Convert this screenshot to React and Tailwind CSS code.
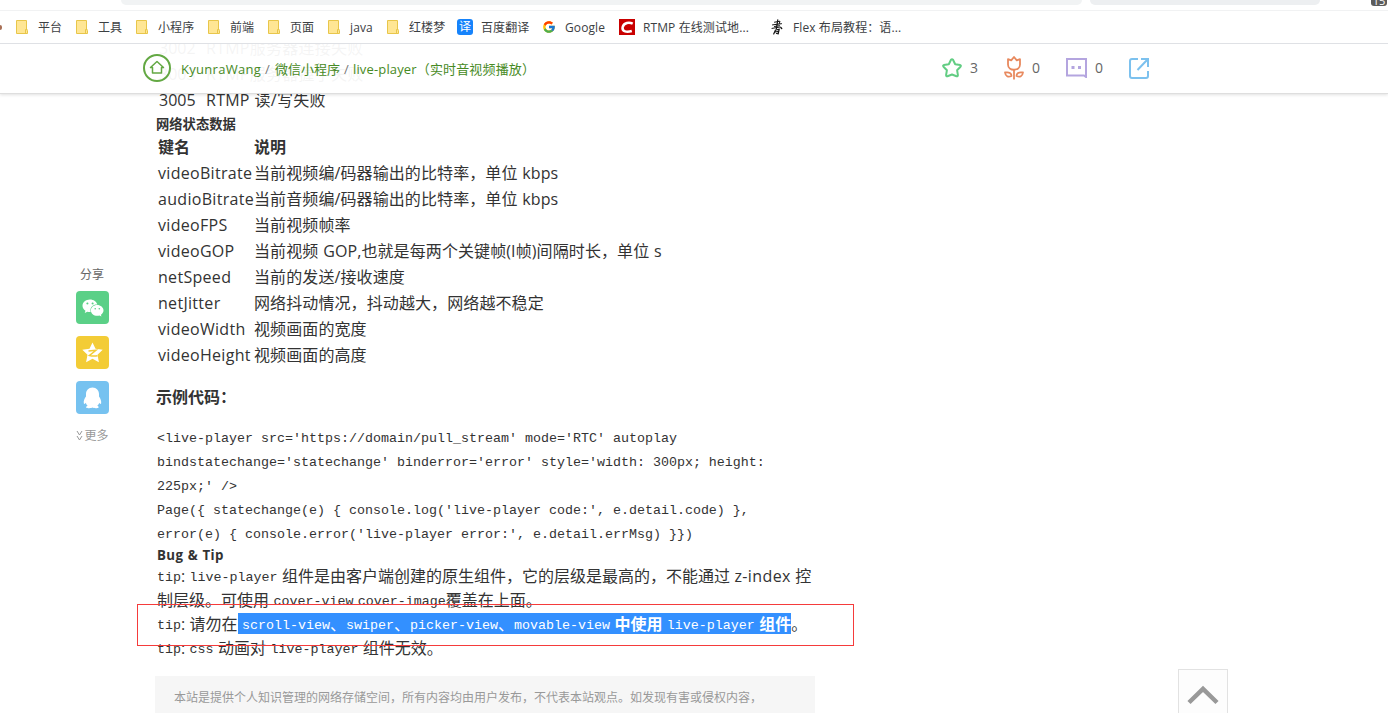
import { FaWeixin } from 'react-icons/fa';
import { FcGoogle } from 'react-icons/fc';

const mono = 'font-["Liberation_Mono","Noto_Sans_CJK_SC",monospace] text-[13.33px]';

const bookmarks = [
    { icon: 'folder', label: '平台', width: 'w-[60px]' },
    { icon: 'folder', label: '工具', width: 'w-[60px]' },
    { icon: 'folder', label: '小程序', width: 'w-[72px]' },
    { icon: 'folder', label: '前端', width: 'w-[60px]' },
    { icon: 'folder', label: '页面', width: 'w-[60px]' },
    { icon: 'folder', label: 'java', width: 'w-[59px]' },
    { icon: 'folder', label: '红楼梦', width: 'w-[72px]' },
    { icon: 'translate', label: '百度翻译', width: 'w-[84px]' },
    { icon: 'google', label: 'Google', width: 'w-[78px]' },
    { icon: 'csdn', label: 'RTMP 在线测试地...', width: 'w-[150px]' },
    { icon: 'book', label: 'Flex 布局教程：语...', width: 'w-[150px]' },
];

const codes = [
    ['3002', 'RTMP服务器连接失败'],
    ['3003', 'RTMP服务器握手失败'],
    ['3005', 'RTMP 读/写失败'],
];

const netStatus = [
    ['videoBitrate', '当前视频编/码器输出的比特率，单位 kbps'],
    ['audioBitrate', '当前音频编/码器输出的比特率，单位 kbps'],
    ['videoFPS', '当前视频帧率'],
    ['videoGOP', '当前视频 GOP,也就是每两个关键帧(I帧)间隔时长，单位 s'],
    ['netSpeed', '当前的发送/接收速度'],
    ['netJitter', '网络抖动情况，抖动越大，网络越不稳定'],
    ['videoWidth', '视频画面的宽度'],
    ['videoHeight', '视频画面的高度'],
];

const codeLines = [
    "<live-player src='https://domain/pull_stream' mode='RTC' autoplay",
    "bindstatechange='statechange' binderror='error' style='width: 300px; height:",
    "225px;' />",
    "Page({ statechange(e) { console.log('live-player code:', e.detail.code) },",
    "error(e) { console.error('live-player error:', e.detail.errMsg) }})",
];

function BookmarkIcon({ type }) {
    if (type === 'folder') {
        return (
            <svg width="16" height="16" viewBox="0 0 16 16">
                <path d="M2.5 1.5h10v9.5l1 .5v3h-11z" fill="#ffe694" stroke="#e8c64a" />
                <path d="M11.5 14v-3.5h2" fill="none" stroke="#e8c64a" />
            </svg>
        );
    }
    if (type === 'translate') {
        return (
            <span className="flex h-4 w-4 items-center justify-center rounded-[3px] bg-[#1683fb] text-xs text-white">译</span>
        );
    }
    if (type === 'google') return <FcGoogle className="h-[14px] w-4" />;
    if (type === 'csdn') {
        return (
            <svg width="16" height="16" viewBox="0 0 16 16">
                <path d="M0 0h16v16H0z" fill="#c90000" />
                <path d="M13.7 4.6C10.5 3 4.8 3.2 3.6 8.3c-.8 4.4 4.2 5.1 9.2 3.7" fill="none" stroke="#fff" strokeWidth="2.5" />
            </svg>
        );
    }
    return (
        <svg width="16" height="16" viewBox="0 0 16 16" fill="none" stroke="#111" strokeLinecap="round">
            <path d="M5.5 3.2l5.5-1-.8 2.5M3.5 5.9l9-1.2M5.5 7.5l5-.8M3 9.4l8-1.4" strokeWidth="1" />
            <path d="M8.8.8L7.4 9.5M6.5 11l-1.8 4M6.5 11l3.7-.7-1 4.5-1.7-.3M6 13l3-.5" strokeWidth="1.2" />
            <path d="M11.8 8.5l.9.9" strokeWidth="1.4" />
        </svg>
    );
}

function BrowserBar() {
    return (
        <div className="relative z-20 h-11 border-b border-[#dfe1e5] bg-white">
            <div className="box-content flex h-[10px] border-b border-[#f1f2f3]">
                <div className="ml-[121px] h-[5px] w-[961px] rounded-b-[10px] bg-[#f1f3f4]" />
                <div className="ml-[8px] h-[5px] w-[230px] rounded-b-[10px] bg-[#edeff1]" />
                <div className="ml-[51px] flex h-[6px] w-4 items-end justify-center overflow-hidden rounded-b-[3px] bg-[#5c5c5c] text-[11px] leading-[10px] text-white">15</div>
            </div>
            <div className="flex h-8 items-center text-xs text-[#3c4043]">
                <div className="mr-[12px] h-[5px] w-[2px] rounded-r bg-[#a86f55]" />
                {bookmarks.map((item) => (
                    <div key={item.label} className={`flex shrink-0 items-center gap-2 whitespace-nowrap ${item.width}`}>
                        <BookmarkIcon type={item.icon} />
                        <span className="pt-[2px] tracking-[0.1px]">{item.label}</span>
                    </div>
                ))}
            </div>
        </div>
    );
}

function PageHeader() {
    return (
        <header className="relative z-10 flex h-[50px] items-center border-b border-[#dedede] bg-white/95 pb-px pl-[143px] text-[13px] text-[#478a24] shadow-[0_1px_3px_rgba(0,0,0,0.12)]">
            <svg width="28" height="28" viewBox="0 0 28 28" fill="none" stroke="#63a843">
                <circle cx="14" cy="14" r="13" strokeWidth="2" />
                <path d="M14 7.5L7.5 13.5h2v5.5h9v-5.5h2z" strokeWidth="1.5" strokeLinejoin="round" />
            </svg>
            <div className="ml-[10px] flex w-[761px] pt-px leading-[18px] whitespace-nowrap">
                <span className="w-[84px] tracking-[0.3px]">KyunraWang</span>
                <span className="w-[10px] text-[#777]">/</span>
                <span className="w-[69px]">微信小程序</span>
                <span className="w-[9px] text-[#777]">/</span>
                <span className="tracking-[0.15px]">live-player（实时音视频播放）</span>
            </div>
            <div className="flex items-center text-sm text-[#666]">
                <div className="flex w-[62px] items-center gap-2">
                    <svg width="20" height="21" viewBox="0 0 20 21" fill="none" stroke="#62cd83" strokeWidth="2" strokeLinejoin="round">
                        <path d="M9 1.8q1-1 2 0l2.2 4.5 5 .8q1.2.5.3 1.6l-3.4 3.5.8 5q-.1 1.5-1.4 1L10 16.5l-4.500 1.700q-1.300.5-1.400-1l.8-5-3.400-3.500q-.9-1.100.3-1.600l5-.8z" />
                    </svg>
                    3
                </div>
                <div className="flex w-[62px] items-center gap-2">
                    <svg width="20" height="24" viewBox="0 0 20 24" fill="none" stroke="#e8895e" strokeWidth="1.8" strokeLinejoin="round">
                        <path d="M4 3.2l3.2 1.2L10 1l2.8 3.4L16 3.2v5.3c0 7-12 7-12 0z" />
                        <path d="M10 14v9.5M1 16.5c4.5-.8 6.5.8 6.5 3.5-3.5 1.5-6 .2-6.5-3.5zM19 16.5c-4.500-.8-6.500.8-6.500 3.500 3.500 1.500 6 .2 6.500-3.500z" />
                    </svg>
                    0
                </div>
                <div className="flex w-[63px] items-center gap-2">
                    <svg width="21" height="20" viewBox="0 0 21 20" fill="none" stroke="#b4a5df" strokeWidth="2">
                        <path d="M1 1h19v18l-2-1.5H1z" />
                        <path d="M5.5 9.5h3M12 9.5h3" strokeWidth="3" />
                    </svg>
                    0
                </div>
                <svg width="21" height="21" viewBox="0 0 21 21" fill="none" stroke="#7cc1ee" strokeWidth="2">
                    <path d="M9 1H3a2 2 0 0 0-2 2v15a2 2 0 0 0 2 2h14a2 2 0 0 0 2-2v-5M12 1h7v8M18.5 1.5L8.5 12" />
                </svg>
            </div>
        </header>
    );
}

function ShareBar() {
    const box = 'flex h-[33px] w-[33px] items-center justify-center rounded-[4px]';
    return (
        <aside className="mt-[229px] ml-[76px] flex w-[33px] shrink-0 flex-col items-center text-xs text-[#666]">
            <span className="mb-[7px] h-[19px] pr-px leading-[20px]">分享</span>
            <div className="flex flex-col gap-3">
                <div className={`${box} bg-[#5bd087]`}>
                    <FaWeixin className="h-[22px] w-[22px] text-white" />
                </div>
                <div className={`${box} bg-[#f3cc36]`}>
                    <svg width="23" height="23" viewBox="0 0 23 23">
                        <path d="M11.5 1.5l3 6.2 7.2 1-5.2 5 1.4 7.5-6.4-3.5-6.4 3.5 1.4-7.5-5.2-5 7.2-1z" fill="#fff" />
                        <path d="M7.5 10l7.5-.7-6.5 5.2q4 1 8 .2" fill="none" stroke="#f3cc36" strokeWidth="1.5" />
                    </svg>
                </div>
                <div className={`${box} bg-[#76c2f0]`}>
                    <svg width="19" height="22" viewBox="0 0 19 22" fill="#fff">
                        <path d="M9.500.5C5.500.5 3 3.500 3 7v2.500C1.500 11.500.4 14 .8 16.200c.4 1.300 1.400.5 2-.5.3 1.300.9 2.300 1.800 3-3 1.600-1 2.500 1.600 2.500 1.500 0 2.700-.2 3.300-.6.6.4 1.800.6 3.300.6 2.400 0 4.400-.9 1.400-2.500.9-.7 1.700-1.700 2-3 .6 1 1.600 1.800 2 .5.2-2.200-.7-4.700-2.200-6.700V7c0-3.500-2.500-6.500-6.500-6.500z" />
                    </svg>
                </div>
            </div>
            <div className="mt-[13px] flex h-[18px] items-center gap-[2px] pr-px whitespace-nowrap text-[#999]">
                <svg width="7" height="12" viewBox="0 0 7 12" fill="none" stroke="#999">
                    <path d="M1 1l2.500 4L6 1M1 6l2.500 4L6 6" />
                </svg>
                更多
            </div>
        </aside>
    );
}

function Mono({ children }) {
    return <span className={`align-[1px] leading-none [word-spacing:0] ${mono}`}>{children}</span>;
}

function Article() {
    return (
        <article className="ml-[46px] w-[660px] shrink-0 text-base whitespace-nowrap text-[#333] [word-spacing:0.5px]">
            <div className="-mt-px mb-px">
                {codes.map(([code, text]) => (
                    <div key={code} className="flex h-[26px] items-center pl-1">
                        <span className="w-[47px]">{code}</span>
                        <span className="tracking-[0.25px]">{text}</span>
                    </div>
                ))}
            </div>
            <h3 className="h-5 pl-px text-[13.3px] leading-5 font-bold">网络状态数据</h3>
            <div className="flex h-[26px] items-center pl-[3px] font-bold">
                <span className="w-[96px]">键名</span>
                <span>说明</span>
            </div>
            {netStatus.map(([name, text]) => (
                <div key={name} className="flex h-[26px] items-center pl-[3px]">
                    <span className="w-[96px] tracking-[0.3px]">{name}</span>
                    <span className="tracking-[0.1px]">{text}</span>
                </div>
            ))}
            <h3 className="mt-[17px] h-6 pl-px leading-6 font-bold">示例代码：</h3>
            <pre className={`mt-[18px] -mb-px pl-[2px] leading-6 [word-spacing:0] ${mono}`}>
                {codeLines.map((line) => (
                    <div key={line} className="h-6 leading-6">{line}</div>
                ))}
            </pre>
            <h3 className="h-[18px] pl-[2px] text-[13.3px] leading-[19px] font-bold tracking-[0.4px]">Bug &amp; Tip</h3>
            <div className="pl-[2px] leading-6 [word-spacing:0.25px]">
                <p className="h-6"><Mono>tip</Mono>: <Mono>live-player</Mono> 组件是由客户端创建的原生组件，它的层级是最高的，不能通过 <span className="tracking-[0.4px]">z-index</span> 控</p>
                <p className="h-6">制层级。可使用 <Mono>cover-view</Mono> <Mono>cover-image</Mono>覆盖在上面。</p>
                <div className="relative h-6">
                    <Mono>tip</Mono>: 请勿在
                    <span className="relative top-px inline-block h-[21px] bg-[#3390ff] align-top leading-[22px] text-white">
                        &nbsp;<Mono>scroll-view</Mono>、<Mono>swiper</Mono>、<Mono>picker-view</Mono>、<Mono>movable-view</Mono> <b>中使用</b> <Mono>live-player</Mono> <b>组件</b>
                    </span>。
                    <div className="absolute -top-[8px] -left-5 h-[42px] w-[717px] border border-[#f53b3b]" />
                </div>
                <p className="h-6"><Mono>tip</Mono>: <Mono>css</Mono> 动画对 <Mono>live-player</Mono> 组件无效。</p>
            </div>
            <div className="mt-4 h-[60px] bg-[#f6f6f6] pt-3 pl-[19px] text-xs leading-[20px] text-[#999]">
                本站是提供个人知识管理的网络存储空间，所有内容均由用户发布，不代表本站观点。如发现有害或侵权内容，
            </div>
        </article>
    );
}

export default function App() {
    return (
        <div className='h-[713px] w-[1388px] overflow-hidden bg-white font-["Open_Sans","Noto_Sans_CJK_SC",sans-serif]'>
            <BrowserBar />
            <PageHeader />
            <main className="-mt-[58px] flex items-start">
                <ShareBar />
                <Article />
                <button className="mt-[633px] ml-[363px] flex h-[50px] w-[50px] shrink-0 justify-center border border-[#e2e2e2] bg-[#fdfdfd] pt-[15px]">
                    <svg width="32" height="20" viewBox="0 0 32 20" fill="none" stroke="#999" strokeWidth="4.5">
                        <path d="M2 17.5L16 4l14 13.5" />
                    </svg>
                </button>
            </main>
        </div>
    );
}
